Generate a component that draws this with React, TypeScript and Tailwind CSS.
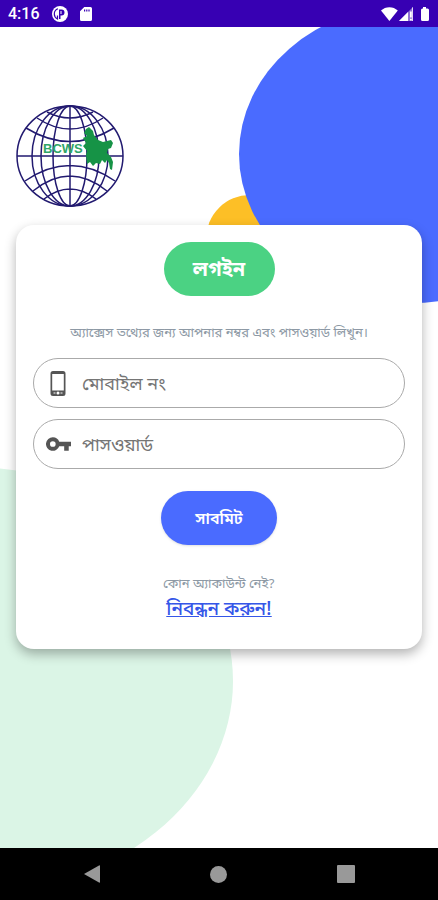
import React from "react";

function StatusBar() {
  return (
    <header className="flex h-[27px] shrink-0 items-center justify-between bg-[#3700b3] px-2 text-white">
      <div className="flex items-center gap-3">
        <span className="font-[Roboto,sans-serif] text-base font-medium">4:16</span>
        <svg className="size-4" viewBox="0 0 16 16" fill="none" aria-hidden="true">
          <circle cx="8" cy="8" r="8" fill="currentColor" />
          <path d="M6 2.800C3.600 3.600 2.300 5.500 2.300 8c0 2.200 1.200 4 3.200 5V9.500" stroke="#3700b3" strokeWidth="1.200" />
          <path d="M7 3.500h2.500a3 3 0 0 1 0 6H8.500V13H7Z" fill="#3700b3" />
          <path d="M9 5v3" stroke="currentColor" />
        </svg>
        <svg className="h-[14px] w-3" viewBox="0 0 12 14" fill="currentColor" aria-hidden="true">
          <path
            fillRule="evenodd"
            d="M4.300 0H10.500A1.500 1.500 0 0 1 12 1.500v11A1.500 1.500 0 0 1 10.500 14h-9A1.500 1.500 0 0 1 0 12.500V4.300ZM4 2.500v2h1.200v-2Zm2.200 0v2h1.200v-2Zm2.200 0v2h1.200v-2Z"
          />
        </svg>
      </div>
      <svg className="h-4 w-[49px]" viewBox="0 0 49 16" fill="currentColor" aria-hidden="true">
        <path d="M0 4.500C2.400 2.400 5.200 1.200 8.400 1.200s6 1.200 8.400 3.300L8.400 15Z" />
        <path d="M18 15 32 1v14Z" opacity=".45" />
        <path d="M18 15 27 6v9Z" />
        <path d="M29 5.500h1.800v6H29zM29 12.800h1.800v1.700H29zM31.300 1.700 32 1v14h-.700Z" />
        <path d="M42 1h3v1.500h1.500A1.500 1.500 0 0 1 48 4v9.500a1.500 1.500 0 0 1-1.500 1.500h-5a1.500 1.500 0 0 1-1.500-1.500V4a1.500 1.500 0 0 1 1.500-1.500H42Z" />
      </svg>
    </header>
  );
}

function Logo() {
  return (
    <svg className="h-[102px] w-[108px]" viewBox="0 0 108 102" role="img" aria-label="BCWS">
      <g fill="none" stroke="#221a70" strokeWidth="1.500">
        <ellipse cx="54" cy="51" rx="53" ry="50" />
        <ellipse cx="54" cy="51" rx="38" ry="50" />
        <ellipse cx="54" cy="51" rx="29" ry="50" />
        <ellipse cx="54" cy="51" rx="17" ry="50" />
        <path d="M54 1v100M1 51h106M31 7q23 12 46 0M21 13q33 22 66 0M10 23q44 27 88 0M9 76q45-31 90 0M17 86q37-30 74 0M28 94q26-20 52 0" />
      </g>
      <text x="27" y="48" className="fill-[#2fa568] font-['Liberation_Sans',sans-serif] text-[13px] font-bold">
        BCWS
      </text>
      <path
        d="M70 24 73 22 77 26 78 30 82 35 87 37 95 35 97 38 95 43 92 44 91 48 95 52 97 57 96 65 94 64 93 58 91 55 89 58 86 55 84 59 80 58 77 61 74 57 71 59 70 50 71 46 67 41 70 38 67 33 71 31 68 28Z"
        fill="#169346"
      />
    </svg>
  );
}

function Backdrop() {
  return (
    <div className="absolute inset-0 overflow-hidden" aria-hidden="true">
      <div className="absolute top-[168px] left-[206px] size-[88px] rounded-full bg-[#fdbf26]" />
      <div className="absolute -top-[22px] left-[239px] h-[298px] w-[344px] rounded-[50%] bg-[#4a6bff]" />
      <div className="absolute top-[440px] -left-[295px] h-[428px] w-[528px] rounded-[50%] bg-[#dbf5e6]" />
    </div>
  );
}

function PhoneIcon() {
  return (
    <svg className="h-[25px] w-4" viewBox="0 0 16 25" fill="#555" aria-hidden="true">
      <path
        fillRule="evenodd"
        d="M3 0h10a2.500 2.500 0 0 1 2.500 2.500v20A2.500 2.500 0 0 1 13 25H3a2.500 2.500 0 0 1-2.500-2.500v-20A2.500 2.500 0 0 1 3 0ZM2.200 3v16.500h11.600V3ZM8 20.500a1.500 1.500 0 1 0 0 3 1.500 1.500 0 0 0 0-3ZM3.500 21.500v1h2v-1Zm7 0v1h2v-1Z"
      />
    </svg>
  );
}

function KeyIcon() {
  return (
    <svg className="h-[14px] w-[25px]" viewBox="1 6 22 12" fill="#555" aria-hidden="true">
      <path d="M12.650 10A5.990 5.990 0 0 0 7 6a6 6 0 1 0 5.650 8H17v4h4v-4h2v-4H12.650ZM7 14.500a2.500 2.500 0 1 1 0-5 2.500 2.500 0 0 1 0 5Z" />
    </svg>
  );
}

type FieldProps = { label: string; type: string; icon: React.ReactNode };

function Field({ label, type, icon }: FieldProps) {
  return (
    <label className="flex h-[50px] items-center gap-[10px] rounded-full border border-[#aaa] pr-5 pl-[10px]">
      <span className="flex w-[28px] justify-center">{icon}</span>
      <input
        type={type}
        placeholder={label}
        aria-label={label}
        className="min-w-0 flex-1 bg-transparent pt-1 text-lg outline-none placeholder:text-[#757575]"
      />
    </label>
  );
}

function NavBar() {
  return (
    <nav className="flex h-[52px] shrink-0 items-center justify-around bg-black px-7 text-[#999]">
      <button type="button" aria-label="Back">
        <svg className="size-[18px]" viewBox="0 0 18 18" fill="currentColor">
          <path d="M1 9 16 .500q1-.500 1 .500v16q0 1-1 .500Z" />
        </svg>
      </button>
      <button type="button" aria-label="Home" className="size-[17px] rounded-full bg-[#999]" />
      <button type="button" aria-label="Recent apps" className="size-[18px] rounded-[1px] bg-[#999]" />
    </nav>
  );
}

export default function App() {
  return (
    <div className="flex min-h-screen flex-col bg-white font-['Noto_Sans_Bengali','Noto_Sans',sans-serif]">
      <StatusBar />
      <main className="relative flex-1 px-4 pt-[78px]">
        <Backdrop />
        <div className="relative">
          <Logo />
          <form className="mt-[18px] flex flex-col rounded-[18px] bg-white px-[17px] pt-[17px] pb-6 shadow-[0_5px_12px_rgba(0,0,0,0.3)]">
            <button type="button" className="h-[54px] w-[111px] self-center rounded-full bg-[#4bd283] pt-1 text-xl font-bold text-white">
              লগইন
            </button>
            <p className="mt-[26px] text-center text-[13px] leading-6 text-[#8d99a5]">
              অ্যাক্সেস তথ্যের জন্য আপনার নম্বর এবং পাসওয়ার্ড লিখুন।
            </p>
            <div className="mt-3 flex flex-col gap-[11px]">
              <Field label="মোবাইল নং" type="tel" icon={<PhoneIcon />} />
              <Field label="পাসওয়ার্ড" type="password" icon={<KeyIcon />} />
            </div>
            <button type="submit" className="mt-[22px] h-[54px] w-[116px] self-center rounded-full bg-[#4a6bff] pt-1 text-base font-semibold text-white shadow-sm">
              সাবমিট
            </button>
            <p className="mt-7 text-center text-[13px] leading-6 text-[#8d99a5]">কোন অ্যাকাউন্ট নেই?</p>
            <a href="#register" className="self-center text-[19px] leading-7 font-medium text-[#3556e8] underline">
              নিবন্ধন করুন!
            </a>
          </form>
        </div>
      </main>
      <NavBar />
    </div>
  );
}
